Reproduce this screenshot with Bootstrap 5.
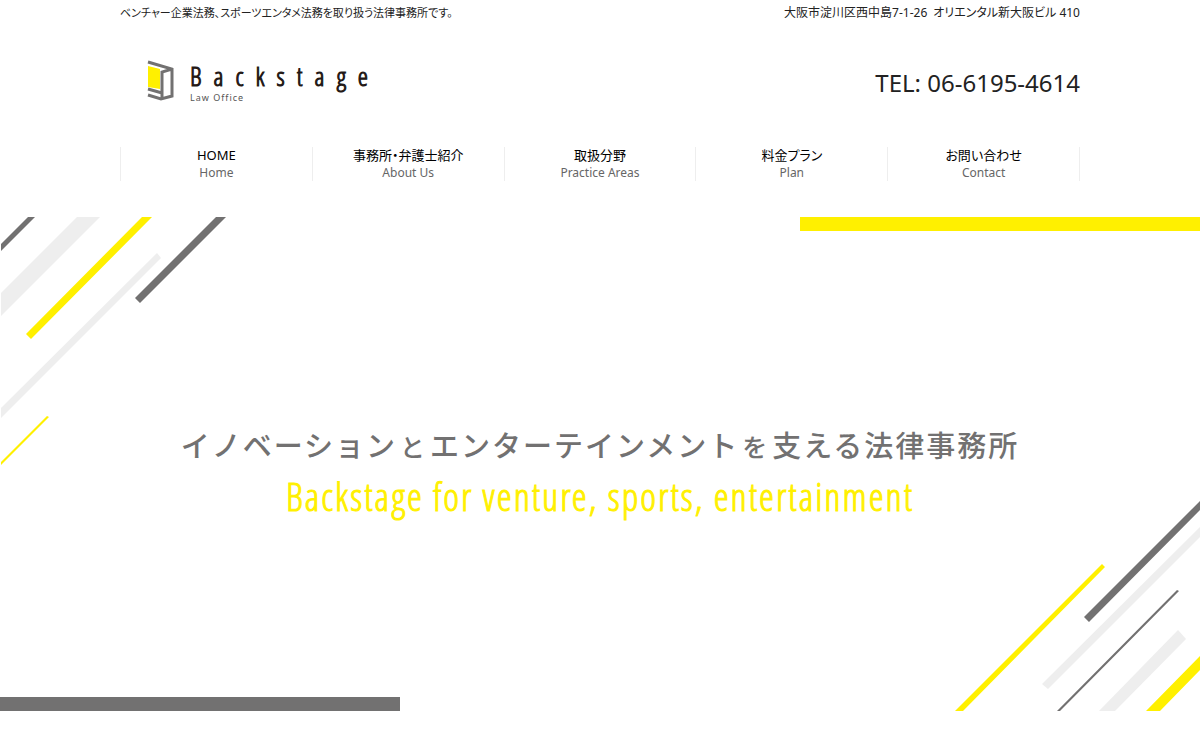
<!DOCTYPE html>
<html lang="ja">
<head>
<meta charset="utf-8">
<meta name="viewport" content="width=device-width, initial-scale=1">
<title>Backstage Law Office</title>
<link href="https://cdn.jsdelivr.net/npm/bootstrap@5.3.0/dist/css/bootstrap.min.css" rel="stylesheet">
<style>
body{font-family:"Noto Sans","Noto Sans CJK JP",sans-serif;font-size:12px;line-height:18px;color:#222;background:#fff}
.site-wrap{max-width:960px}
.jp-text{font-family:"Noto Sans","Noto Sans CJK JP",sans-serif;font-feature-settings:"palt"}
.intro-line{font-size:11px;line-height:26px}
.address-line{font-size:12px;line-height:26px}
.brand-row{padding-top:34px;padding-bottom:41px}
.brand-link{padding-left:27px;color:#231815}
.brand-name,.copy-en{font-family:"Open Sans Condensed Light","Roboto Condensed",Lato,sans-serif;-webkit-text-stroke:1px}
.brand-name{font-size:26px;line-height:32px;letter-spacing:12px}
.brand-sub{font-size:9px;line-height:12px;letter-spacing:1px;color:#555}
.tel-line{font-size:24px;line-height:34px}
.main-menu{border-left:1px solid #eee}
.main-menu a{border-right:1px solid #eee;line-height:17px}
.menu-ja{font-size:13px;color:#000}
.menu-en{font-size:12px;color:#666}
.hero-area{margin-top:36px;padding-bottom:39px}
.hero-bar{width:33.333%;height:14px}
.bar-yellow{background:#fff000}
.bar-gray{background:#727171}
.hero-copy{padding-top:191px;padding-bottom:173px}
.copy-ja{font-family:"Noto Sans CJK JP",sans-serif;font-weight:500;font-size:29px;line-height:44px;letter-spacing:2px;color:#727171}
.copy-ja span{font-size:25px;margin:0 3px}
.copy-en{font-size:38px;line-height:56px;letter-spacing:2px;color:#fff000}
.deco{pointer-events:none}
</style>
</head>
<body>
<header class="site-wrap container-fluid p-0">
  <div class="jp-text d-flex justify-content-between flex-wrap">
    <h1 class="intro-line fw-normal m-0">ベンチャー企業法務、スポーツエンタメ法務を取り扱う法律事務所です。</h1>
    <div class="address-line">大阪市淀川区西中島7-1-26&ensp;オリエンタル新大阪ビル 410</div>
  </div>
  <div class="brand-row d-flex justify-content-between align-items-center flex-wrap">
    <a href="#" class="brand-link d-flex gap-3 text-decoration-none" aria-label="Backstage Law Office">
      <svg width="27" height="46" viewBox="0 0 27 46" aria-hidden="true">
        <path d="M1 6 L13 9 V29 L1 27Z" fill="#fff000"/>
        <path d="M1 2 L25 9 V36 L14 39 L1 35 M25 9 L15 12 V33 L1 29 M15 32 V38" fill="none" stroke="#727171" stroke-width="3"/>
      </svg>
      <span>
        <span class="brand-name d-block">Backstage</span>
        <span class="brand-sub d-block">Law Office</span>
      </span>
    </a>
    <div class="tel-line">TEL: 06-6195-4614</div>
  </div>
  <nav class="main-menu jp-text row row-cols-5 g-0 text-center">
    <a href="#" class="col text-decoration-none"><span class="menu-ja d-block">HOME</span><span class="menu-en d-block">Home</span></a>
    <a href="#" class="col text-decoration-none"><span class="menu-ja d-block">事務所・弁護士紹介</span><span class="menu-en d-block">About Us</span></a>
    <a href="#" class="col text-decoration-none"><span class="menu-ja d-block">取扱分野</span><span class="menu-en d-block">Practice Areas</span></a>
    <a href="#" class="col text-decoration-none"><span class="menu-ja d-block">料金プラン</span><span class="menu-en d-block">Plan</span></a>
    <a href="#" class="col text-decoration-none"><span class="menu-ja d-block">お問い合わせ</span><span class="menu-en d-block">Contact</span></a>
  </nav>
</header>
<main class="hero-area">
  <section class="position-relative overflow-hidden">
    <svg class="deco position-absolute top-0 start-0" width="230" height="250" viewBox="0 0 230 250" aria-hidden="true">
      <path d="M28 0H35L1 34V27Z M216 0H226L140 86L135 81Z" fill="#727171"/>
      <path d="M77 0H100L1 99V76Z M157 36L161 41L1 201V191Z" fill="#eee"/>
      <path d="M142 0H152L31 122L26 117Z M47 199L49 200L1 248V245Z" fill="#fff000"/>
    </svg>
    <svg class="deco position-absolute bottom-0 end-0" width="260" height="221" viewBox="0 0 260 221" aria-hidden="true">
      <path d="M144 127L149 132L260 20V11Z M117 221H120L239 101L237 100Z" fill="#727171"/>
      <path d="M102 194L108 199L260 47V37Z M159 221H175L246 149L238 140Z" fill="#eee"/>
      <path d="M15 221H23L165 77L162 74Z M206 221H220L260 180V166Z" fill="#fff000"/>
    </svg>
    <div class="hero-bar bar-yellow ms-auto"></div>
    <div class="hero-copy text-center">
      <p class="copy-ja m-0">イノベーション<span>と</span>エンターテインメント<span>を</span>支える法律事務所</p>
      <p class="copy-en m-0">Backstage for venture, sports, entertainment</p>
    </div>
    <div class="hero-bar bar-gray"></div>
  </section>
</main>
<script src="https://cdn.jsdelivr.net/npm/bootstrap@5.3.0/dist/js/bootstrap.bundle.min.js"></script>
</body>
</html>
